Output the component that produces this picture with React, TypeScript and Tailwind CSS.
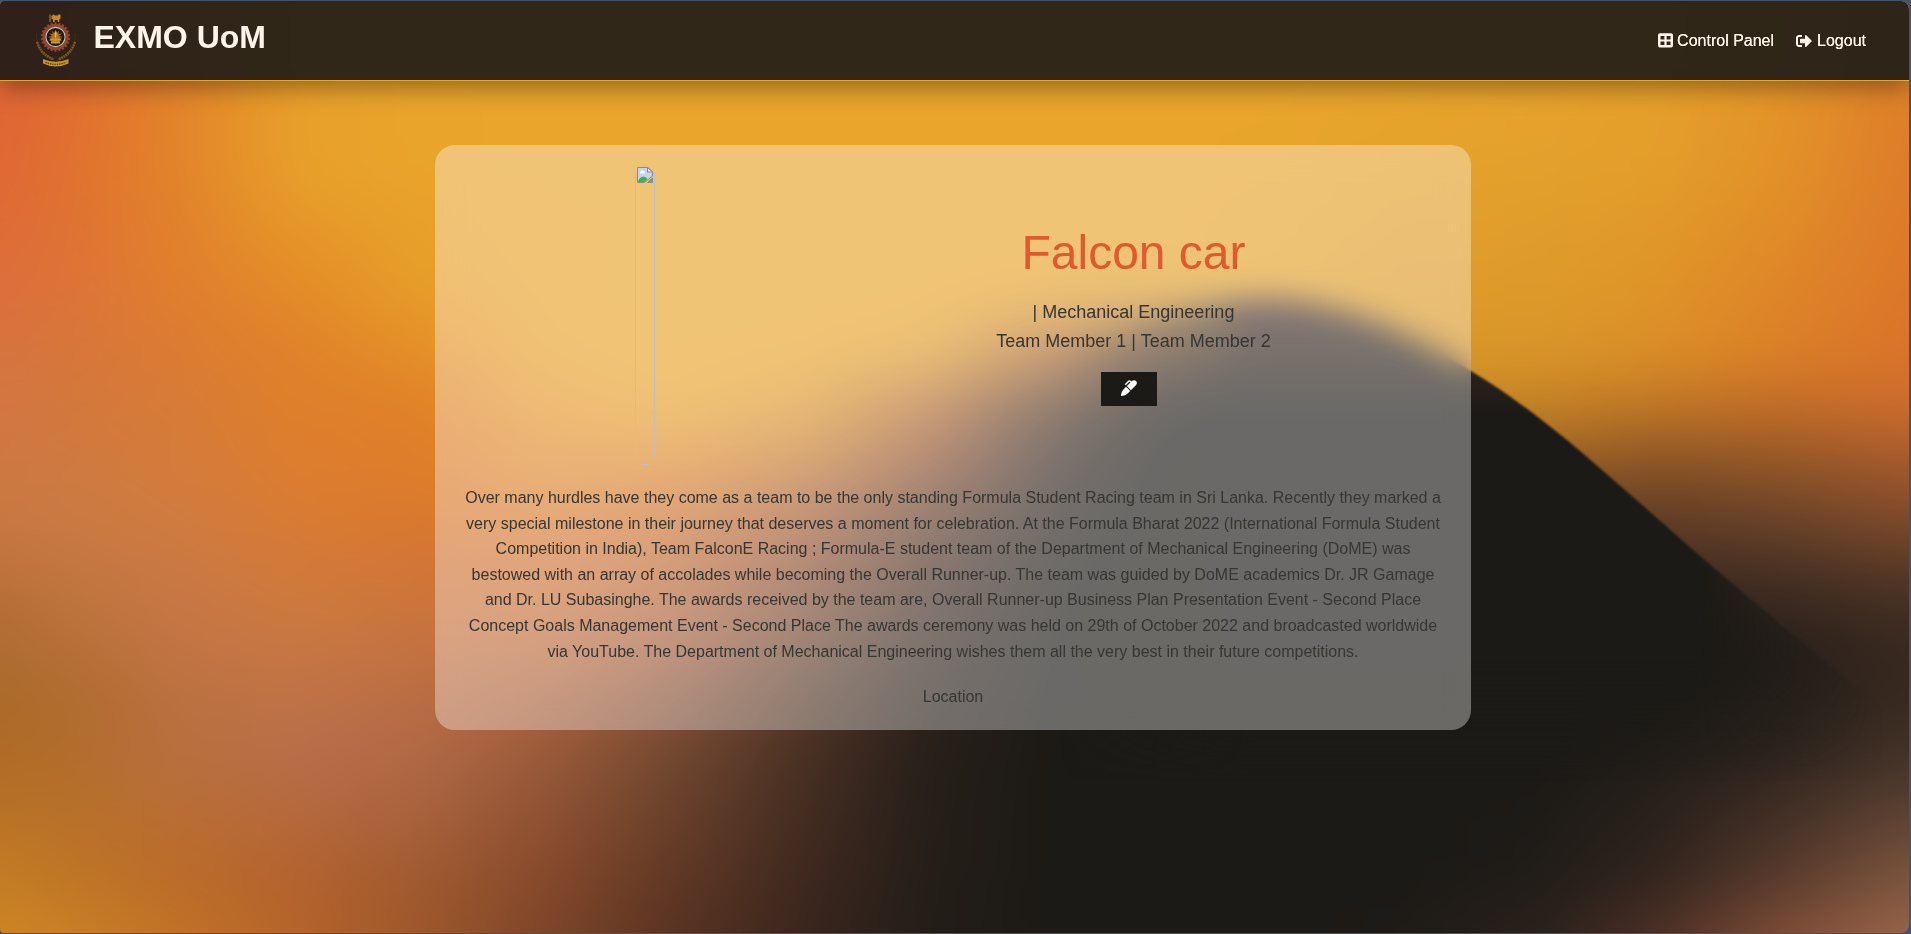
import React from "react";
import { FaSignOutAlt } from "react-icons/fa";
import { FaMarker } from "react-icons/fa6";

const XS = [0, 60, 180, 300, 420, 545, 675, 808, 932, 1052, 1165, 1270, 1400, 1540, 1660, 1780, 1911];

const D = "#1c1a16";
const Y = "#e9a52c";

const ROWS: { y: number; c: string[] }[] = [
  { y: 58, c: ["#e06535", "#e26a32", "#e3852b", "#e8a12b", Y, Y, Y, Y, Y, Y, Y, Y, Y, "#e7a32c", "#e6a02c", "#e3952a", "#de7f2a"] },
  { y: 175, c: ["#e06835", "#e07030", "#e2842a", "#e8a02a", "#e9a42c", Y, Y, Y, Y, Y, Y, "#e8a52c", "#e4a22d", "#e3a02c", "#e39d2a", "#e29129", "#de7b29"] },
  { y: 292, c: ["#dc6f3d", "#dc733a", "#e07e2e", "#e38b28", "#e79d29", "#e9a42c", Y, Y, Y, Y, "#e8a52c", "#e4a22c", "#de9c2b", "#dd9a2a", "#de9328", "#de8528", "#dc762a"] },
  { y: 350, c: ["#d77340", "#d6763c", "#dc7b33", "#e0822a", "#e48f28", "#e9a32c", Y, Y, "#e5a22d", "#b46a30", "#6f4730", "#d0952a", "#d8982a", "#da962a", "#dc8e28", "#dc8028", "#db732a"] },
  { y: 409, c: ["#d27742", "#d2783e", "#d67c37", "#df7f2b", "#e08028", "#e6982c", "#e8a42d", "#dc962a", "#b06430", "#4b3324", "#241e1a", D, "#c98424", "#c28025", "#bc7426", "#c06b28", "#cb6b2e"] },
  { y: 468, c: ["#ce7842", "#ce7a42", "#d47c3b", "#dd7d2f", "#df7d29", "#df892b", "#db842b", "#c0712f", "#864b2d", "#332620", D, D, "#985e24", "#925a24", "#835027", "#8c5427", "#9f572d"] },
  { y: 526, c: ["#c87840", "#c97a43", "#cf7b41", "#d87b34", "#d8782f", "#d97a32", "#ca6e30", "#9d5530", "#563626", "#241f1a", D, D, D, "#5c3c25", "#5c3a26", "#65402a", "#7a482b"] },
  { y: 584, c: ["#ba7038", "#c0753f", "#c97844", "#d07a3c", "#cf7539", "#cc7438", "#b96636", "#844b30", "#442d23", "#1e1b17", D, D, D, "#3a2a20", "#38291f", "#402d22", "#4d3424"] },
  { y: 643, c: ["#ae6c32", "#b67037", "#c37545", "#c87842", "#c57242", "#c16e3e", "#a55d3c", "#68442f", "#342720", D, D, D, D, D, "#1f1d18", "#291f1c", "#38291f"] },
  { y: 700, c: ["#ab6a2a", "#ae6c2c", "#bb7140", "#bf7248", "#b96d43", "#aa623c", "#855035", "#523625", "#2a211b", D, D, D, D, D, "#1e1c17", "#28221c", "#38291f"] },
  { y: 760, c: ["#b06b26", "#b26d2b", "#b8703f", "#b86e49", "#b06947", "#98593a", "#6f4730", "#472f23", "#261f1a", D, D, D, D, D, "#221e1a", "#30251f", "#463429"] },
  { y: 877, c: ["#c47c25", "#bf7625", "#bb6b29", "#b3622e", "#9f5a30", "#86492b", "#603824", "#3d281f", "#241e18", D, D, D, D, "#201d19", "#33251e", "#583a2c", "#7d563f"] },
  { y: 940, c: ["#cf8726", "#cb8226", "#c27326", "#b5642a", "#9e572a", "#7c452a", "#573222", "#38251d", "#221d18", D, D, D, "#1f1c18", "#2c211c", "#523226", "#824f39", "#9c674b"] },
];

function Backdrop() {
  return (
    <svg className="absolute inset-0 h-full w-full" viewBox="0 0 1909 932" preserveAspectRatio="none" aria-hidden="true">
      <defs>
        {ROWS.map((r, i) => (
          <linearGradient key={i} id={`row${i}`} gradientUnits="userSpaceOnUse" x1="0" x2="1911" y1="0" y2="0">
            {r.c.map((c, j) => (
              <stop key={j} offset={XS[j] / 1911} stopColor={c} />
            ))}
          </linearGradient>
        ))}
        {ROWS.slice(1).map((r, i) => (
          <React.Fragment key={i}>
            <linearGradient id={`fade${i + 1}`} gradientUnits="userSpaceOnUse" x1="0" x2="0" y1={ROWS[i].y} y2={r.y}>
              <stop offset="0" stopColor="#fff" stopOpacity="0" />
              <stop offset="1" stopColor="#fff" />
            </linearGradient>
            <mask id={`mask${i + 1}`} maskUnits="userSpaceOnUse" x="-100" y="-100" width="2120" height="1140">
              <rect x="-100" y={ROWS[i].y} width="2120" height="1100" fill={`url(#fade${i + 1})`} />
            </mask>
          </React.Fragment>
        ))}
        <filter id="smooth" filterUnits="userSpaceOnUse" x="-100" y="-100" width="2120" height="1140" colorInterpolationFilters="sRGB">
          <feGaussianBlur stdDeviation="24" />
        </filter>
        <filter id="soft" filterUnits="userSpaceOnUse" x="600" y="100" width="1400" height="900" colorInterpolationFilters="sRGB">
          <feGaussianBlur stdDeviation="24" />
        </filter>
        <filter id="crisp" filterUnits="userSpaceOnUse" x="600" y="100" width="1400" height="900" colorInterpolationFilters="sRGB">
          <feGaussianBlur stdDeviation="1" />
        </filter>
        <linearGradient id="hillX" gradientUnits="userSpaceOnUse" x1="1060" x2="1900" y1="0" y2="0">
          <stop offset="0" stopColor="#fff" stopOpacity="0" />
          <stop offset="0.23" stopColor="#fff" />
          <stop offset="0.76" stopColor="#fff" />
          <stop offset="0.98" stopColor="#fff" stopOpacity="0" />
        </linearGradient>
        <linearGradient id="hillY" gradientUnits="userSpaceOnUse" x1="0" x2="0" y1="296" y2="780">
          <stop offset="0" stopColor="#4a3230" />
          <stop offset="0.1" stopColor="#33271f" />
          <stop offset="0.24" stopColor="#1c1a16" />
          <stop offset="0.75" stopColor="#1c1a16" />
          <stop offset="1" stopColor="#1c1a16" stopOpacity="0" />
        </linearGradient>
        <mask id="hillMask" maskUnits="userSpaceOnUse" x="1000" y="200" width="911" height="734">
          <rect x="1000" y="200" width="911" height="734" fill="url(#hillX)" />
        </mask>
      </defs>
      <g filter="url(#smooth)">
        {ROWS.map((r, i) => (
          <rect key={i} x="-100" y="-100" width="2120" height="1140" fill={`url(#row${i})`} mask={i ? `url(#mask${i})` : undefined} />
        ))}
      </g>
      <path d="M1150 460C1175 400 1220 358 1280 352C1320 352 1360 370 1390 400L1440 480L1400 620L1150 640Z" fill="#1c1a16" filter="url(#soft)" />
      <g mask="url(#hillMask)">
        <path
          d="M1060 352C1120 326 1190 299 1262 297C1335 298 1405 330 1471 370C1505 390 1537 415 1567 439C1590 458 1611 477 1633 496C1656 516 1678 536 1700 555C1733 583 1767 612 1800 640C1835 668 1873 700 1911 730V934H1060Z"
          fill="url(#hillY)"
          filter="url(#crisp)"
        />
      </g>
    </svg>
  );
}

function Crest() {
  const teeth = Array.from({ length: 22 }, (_, i) => (i * 360) / 22);
  const rays = Array.from({ length: 12 }, (_, i) => i * 30);
  return (
    <svg className="h-[54px] w-[40px] shrink-0" viewBox="0 0 40 54" aria-hidden="true">
      <path d="M13.500 1.500h1v7.500h-1zM15.500 3l2-1.500 1.500 1h3l1-1.500 1.500 1v3.500l-1.200 1V9h-1.600V7h-3v2H17V6.500l-1.500-1z" fill="#c48a26" />
      <g transform="translate(19.500 24)">
        {teeth.map((a) => (
          <rect key={a} x="-1.100" y="-14.600" width="2.200" height="3.400" fill="#93472a" transform={`rotate(${a})`} />
        ))}
        <circle r="11.600" fill="none" stroke="#93472a" strokeWidth="2.800" />
        <circle r="9.600" fill="#1f1a17" stroke="#c9c2bc" strokeWidth="1.100" />
        {rays.map((a) => (
          <path key={a} d="M-1 -3L0 -7.800L1 -3Z" fill="#a8741f" transform={`rotate(${a})`} />
        ))}
        <circle r="4" fill="#a8741f" />
        <path d="M-6 1.500h12l-1 2.300H-5zM-4.500 4.300h9v2.200h-9z" fill="#cf952a" />
        <path d="M-.8 -5.500h2l-.5 6h-1.200z" fill="#f5bd30" />
      </g>
      <path d="M.8 20C-.2 34 6 42 18 46M39.200 20C40.200 34 34 42 22 46" fill="none" stroke="#43301b" strokeWidth="1" />
      <path d="M1 29C4 38 9 43 18 46.500M39 29C36 38 31 43 22 46.500" fill="none" stroke="#80581f" strokeWidth="2.600" strokeDasharray="1.800 .7" />
      <path d="M7 46Q19.500 51.500 32.500 46L32.500 50.500Q19.500 56.500 7 50.500Z" fill="#c98f28" />
      <path d="M9.500 49.300Q19.500 53.500 30 49.300" fill="none" stroke="#5a3c18" strokeWidth="1.300" strokeDasharray="1.400 .9" />
    </svg>
  );
}

function GridIcon() {
  return (
    <svg className="h-[15px] w-[15px] shrink-0" viewBox="0 0 15 15" fill="currentColor" aria-hidden="true">
      <path
        fillRule="evenodd"
        d="M2 .3H13A2 2 0 0 1 15 2.300V12.500A2 2 0 0 1 13 14.500H2A2 2 0 0 1 0 12.500V2.300A2 2 0 0 1 2 .3ZM2.500 3V6.400H6.400V3ZM8.600 3V6.400H12.500V3ZM2.500 8.500V12H6.400V8.500ZM8.600 8.500V12H12.500V8.500Z"
      />
    </svg>
  );
}

function MissingImage() {
  return (
    <svg className="h-[300px] w-[20px] shrink-0" viewBox="0 0 20 300" role="img" aria-label="" shapeRendering="crispEdges">
      <g fill="#c0c0c0">
        <rect x="0" y="7" width="1" height="285" />
        <rect x="19" y="7" width="1" height="285" />
        <rect x="7" y="0" width="6" height="1" fillOpacity="0.6" />
        <rect x="6" y="299" width="8" height="1" />
      </g>
      <g transform="translate(2 2)" shapeRendering="auto">
        <path d="M.5 .5H11L15.500 5V9L7.500 15.500H.5Z" fill="#c3d5f5" stroke="#8b8b8b" />
        <path d="M1 15Q2 10 6.500 9.500Q9 9.500 10.500 12L7.300 15Z" fill="#4fab45" />
        <path d="M3 6.500Q2.500 5 4 4.500Q5 2.500 6.500 3.800Q8.500 4 8 6.500Z" fill="#fff" />
        <path d="M10.500 .5V5H15.500Z" fill="#f4f4f4" stroke="#8b8b8b" />
        <path d="M10.500 15.500L15.500 11V15.500Z" fill="#5dae50" stroke="#8b8b8b" />
      </g>
    </svg>
  );
}

const LINES = [
  "Over many hurdles have they come as a team to be the only standing Formula Student Racing team in Sri Lanka. Recently they marked a",
  "very special milestone in their journey that deserves a moment for celebration. At the Formula Bharat 2022 (International Formula Student",
  "Competition in India), Team FalconE Racing ; Formula-E student team of the Department of Mechanical Engineering (DoME) was",
  "bestowed with an array of accolades while becoming the Overall Runner-up. The team was guided by DoME academics Dr. JR Gamage",
  "and Dr. LU Subasinghe. The awards received by the team are, Overall Runner-up Business Plan Presentation Event - Second Place",
  "Concept Goals Management Event - Second Place The awards ceremony was held on 29th of October 2022 and broadcasted worldwide",
  "via YouTube. The Department of Mechanical Engineering wishes them all the very best in their future competitions.",
];

export default function App() {
  return (
    <div className="h-[934px] w-full overflow-hidden bg-[#43546a] pt-px pr-[2px] pb-px font-['Liberation_Sans',Arial,sans-serif]">
      <div className="relative h-full overflow-hidden rounded-l-[4px] rounded-r-[8px]">
        <Backdrop />
        <div className="relative flex flex-col">
          <header className="flex h-[80px] items-start justify-between border-b border-[#e9a52c] bg-[#1c1a16]/90 pr-[43px] pl-[36px] text-[#fff5eb] shadow-[0_5px_25px_rgba(0,0,0,0.4)] backdrop-blur-[10px]">
            <div className="flex items-start pt-[12px]">
              <Crest />
              <h1 className="ml-[17.5px] text-[32px] leading-[48px] font-bold">EXMO UoM</h1>
            </div>
            <nav className="flex gap-[22px] pt-[27px] text-[16px] leading-[25px] [text-shadow:0_0_0.5px_#fff5eb]">
              <a className="flex items-center gap-[4px]">
                <GridIcon />
                Control Panel
              </a>
              <a className="flex items-center gap-[5px]">
                <FaSignOutAlt className="h-4 w-4" />
                Logout
              </a>
            </nav>
          </header>

          <main className="mt-[64px] ml-[435px] w-[1036px] rounded-[20px] bg-white/35 p-[20px] text-center text-[#363633] backdrop-blur-[15px]">
            <section className="flex h-[300px]">
              <div className="w-[361px] pl-[180px]">
                <MissingImage />
              </div>
              <div className="flex flex-1 flex-col items-center pt-[50px]">
                <h2 className="text-[48px] leading-[76.8px] text-[#e05a30]">Falcon car</h2>
                <p className="mt-[6px] text-[18px] leading-[28.8px]">| Mechanical Engineering</p>
                <p className="text-[18px] leading-[28.8px]">Team Member 1 | Team Member 2</p>
                <button className="mt-[17px] mr-[9px] flex h-[34px] w-[56px] items-center justify-center bg-[#1c1a16] pb-[2px] text-white">
                  <FaMarker className="h-4 w-4" />
                </button>
              </div>
            </section>
            <p className="mt-[20px] text-[16px] leading-[25.6px]">
              {LINES.map((l) => (
                <span key={l} className="block whitespace-nowrap">
                  {l}
                </span>
              ))}
            </p>
            <p className="mt-[20px] text-[16px] leading-[25.6px]">Location</p>
          </main>
        </div>
      </div>
    </div>
  );
}
